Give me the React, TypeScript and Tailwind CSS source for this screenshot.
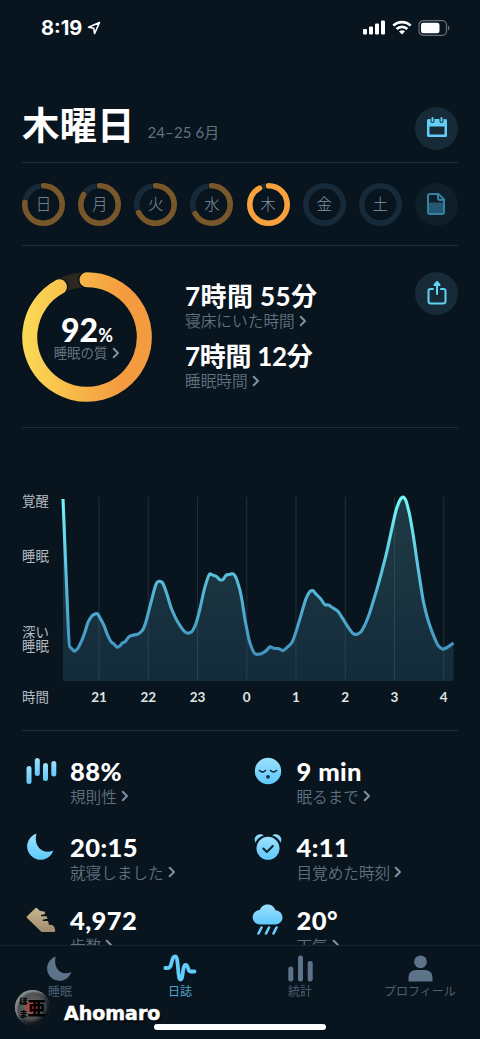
import type { ReactNode } from 'react';
import { clsx } from 'clsx';

const days = [
    { label: '日', value: 77 },
    { label: '月', value: 84 },
    { label: '火', value: 68 },
    { label: '水', value: 67 },
    { label: '木', value: 92, active: true },
    { label: '金', value: 0 },
    { label: '土', value: 0 },
];

const hours = ['21', '22', '23', '0', '1', '2', '3', '4'];

// Sleep depth samples, x / y inside the 391x186 plot
const samples: [number, number][] = [
    [0, 4], [2.5, 65], [6, 151], [8.5, 153.5], [11.5, 156.5], [15, 153.5], [19, 145], [22, 137], [25, 127],
    [29, 120.5], [33, 118.5], [35, 119], [37, 123], [41, 130], [44, 139], [48, 147], [51, 149], [54, 152.5],
    [57, 151], [59, 148], [62, 147], [66, 141.5], [70, 140], [75, 139.5], [80, 135], [83, 127], [87, 111],
    [92, 92], [94, 87], [97, 86], [100, 88], [104, 99], [108, 113], [114, 126], [120, 135], [124, 138.5],
    [129, 137], [133, 129], [137, 114], [141, 95], [145, 82], [147, 78.5], [149, 80], [153, 81], [157, 85],
    [160, 85], [163, 80], [166, 79.5], [170, 78.5], [173, 82], [177, 95], [179, 105], [182, 125], [186, 145],
    [189, 154], [192, 159.5], [198, 159], [203, 156], [207, 151.5], [211, 153.5], [216, 153.5], [220, 156],
    [224, 152.5], [229, 148], [233, 137], [238, 120], [243, 103], [247, 96], [250, 95.5], [253, 99],
    [258, 104], [262, 110.5], [265, 109.5], [270, 113], [275, 116], [280, 124], [285, 132], [290, 139],
    [294, 139.5], [298, 137], [302, 130], [306, 120], [311, 104], [316, 87], [320, 72], [324, 56], [329, 33],
    [333, 15], [337, 4.5], [340, 1.5], [343, 5], [347, 21], [351, 45], [355, 73], [360, 105], [364, 122],
    [369, 137], [375, 151], [380, 154.5], [385, 152], [390.5, 148],
];

const linePath = samples
    .map(([x, y], i) => {
        if (i === 0) return `M${x} ${y}`;
        const next = samples[i + 1];
        if (!next) return `L${x} ${y}`;
        // keep most of each sample's corner so the trace stays slightly rough
        const prev = samples[i - 1];
        const inX = x + (prev[0] - x) * 0.3;
        const inY = y + (prev[1] - y) * 0.3;
        return `L${inX} ${inY}Q${x} ${y} ${x + (next[0] - x) * 0.3} ${y + (next[1] - y) * 0.3}`;
    })
    .join('');

function Ring({ value, active }: { value: number; active?: boolean }) {
    return (
        <svg viewBox="0 0 43 43" className="absolute inset-0 size-full" fill="none" strokeWidth="5.6">
            <circle cx="21.5" cy="21.5" r="18.7" stroke={active ? '#1e2a33' : '#172a3a'} />
            {value > 0 && (
                <>
                    <circle cx="21.5" cy="21.5" r="18.7" pathLength="100" stroke="#08141e" strokeWidth="7" strokeLinecap="round" strokeDasharray={`${value} 100`} transform="rotate(-90 21.5 21.5)" />
                    <circle cx="21.5" cy="21.5" r="18.7" pathLength="100" stroke={active ? '#f9a13c' : '#78572b'} strokeLinecap="round" strokeDasharray={`${value} 100`} transform="rotate(-90 21.5 21.5)" />
                </>
            )}
        </svg>
    );
}

function Chevron({ className = 'ml-1' }: { className?: string }) {
    return (
        <svg viewBox="0 0 8 12" className={clsx('h-3 w-2 shrink-0', className)} fill="none" stroke="#7f91a0" strokeWidth="2" strokeLinecap="round" strokeLinejoin="round">
            <path d="M1.7 1.7 6 6l-4.3 4.3" />
        </svg>
    );
}

function RoundButton({ children, dim }: { children: ReactNode; dim?: boolean }) {
    return (
        <button className={clsx('flex size-[43px] shrink-0 items-center justify-center rounded-full', dim ? 'bg-[#0e1f2a]' : 'bg-[#172a38]')}>
            {children}
        </button>
    );
}

function Metric({ icon, value, label }: { icon: ReactNode; value: string; label: string }) {
    return (
        <div className="flex h-[75px]">
            <div className="flex h-9 w-[47px] shrink-0 items-center pl-[3px]">{icon}</div>
            <div>
                <div className="flex h-9 items-center whitespace-pre font-['Lato','Noto_Sans_CJK_JP',sans-serif] text-[25.5px] leading-9 font-black tracking-[0.4px] text-white">{value}</div>
                <div className="-mt-[4px] flex items-center text-[15.6px] leading-[22px] text-[#5f717e]">
                    {label}
                    <Chevron />
                </div>
            </div>
        </div>
    );
}

function Tab({ icon, label, active }: { icon: ReactNode; label: string; active?: boolean }) {
    return (
        <div className={clsx('flex flex-1 flex-col items-center pt-2', active ? 'text-[#61cdfa]' : 'text-[#5d738a]')}>
            <div className="flex h-7 items-center">{icon}</div>
            <span className={clsx('text-xs leading-[18px]', active ? 'text-[#4da6cc]' : 'text-[#4d6172]')}>{label}</span>
        </div>
    );
}

function StatusBar() {
    return (
        <div className="flex h-[55px] shrink-0 items-center justify-between pr-[30px] pl-[41px] text-white">
            <div className="flex items-center gap-[5px]">
                <span className="font-['Inter',sans-serif] text-[20px] leading-none font-bold">8:19</span>
                <svg viewBox="0 0 14 14" className="size-[14px]" fill="none" stroke="currentColor" strokeWidth="1.6" strokeLinejoin="round">
                    <path d="M12.5 1.5 1.5 6.3l5.2.9.9 5.3z" />
                </svg>
            </div>
            <div className="flex items-center gap-[6px]">
                <svg viewBox="0 0 24 15" className="h-[15px] w-6" fill="currentColor">
                    <rect x="1" y="9" width="4" height="5.5" rx="1.1" />
                    <rect x="7" y="6.5" width="4" height="8" rx="1.1" />
                    <rect x="13" y="3.5" width="4" height="11" rx="1.1" />
                    <rect x="19" y="0.5" width="4" height="14" rx="1.1" />
                </svg>
                <svg viewBox="0 0 20 15" className="h-[15px] w-5" fill="none" stroke="currentColor" strokeWidth="2.6">
                    <path d="M1.3 5.6a12.5 12.5 0 0 1 17.4 0M4.6 9a7.8 7.8 0 0 1 10.8 0" />
                    <path d="m10 14.6-3-3a4.3 4.3 0 0 1 6 0z" fill="currentColor" stroke="none" />
                </svg>
                <svg viewBox="0 0 32 16" className="h-4 w-8">
                    <rect x="1" y="0.7" width="27.5" height="14.6" rx="4.3" fill="none" stroke="#66717a" strokeWidth="1.2" />
                    <rect x="3" y="2.8" width="18.5" height="10.4" rx="2.2" fill="#fff" />
                    <path d="M30 5.7c2 .7 2 3.9 0 4.6z" fill="#66717a" />
                </svg>
            </div>
        </div>
    );
}

function SleepChart() {
    return (
        <section className="mx-[22px] h-[303px] shrink-0 border-b border-[#1c2e3b] pt-[67px]">
            <div className="flex h-[187px]">
                <div className="-mt-[2px] flex w-[41px] shrink-0 flex-col text-[13.4px] leading-[14px] text-[#b5bdc3]">
                    <span>覚醒</span>
                    <span className="mt-[41px]">睡眠</span>
                    <span className="mt-[62px]">深い</span>
                    <span>睡眠</span>
                </div>
                <svg viewBox="0 0 391 186" className="h-[186px] w-[391px] shrink-0 overflow-visible" fill="none">
                    <defs>
                        <linearGradient id="line" x1="0" y1="0" x2="0" y2="160" gradientUnits="userSpaceOnUse">
                            <stop stopColor="#72fafa" />
                            <stop offset="0.5" stopColor="#58bfdb" />
                            <stop offset="1" stopColor="#4193c0" />
                        </linearGradient>
                        <linearGradient id="area" x1="0" y1="0" x2="0" y2="186" gradientUnits="userSpaceOnUse">
                            <stop stopColor="#1f3b45" />
                            <stop offset="1" stopColor="#142b3a" />
                        </linearGradient>
                    </defs>
                    <path d={`${linePath}V186H0Z`} fill="url(#area)" />
                    {hours.map((h, i) => (
                        <path key={h} d={`M${36 + i * 49.25} 2V186`} stroke="#4b7883" strokeOpacity="0.3" />
                    ))}
                    <path d={linePath} stroke="url(#line)" strokeWidth="3.1" strokeLinejoin="round" />
                </svg>
            </div>
            <div className="mt-[6px] flex items-center">
                <span className="-mt-[2px] w-[52.4px] shrink-0 text-[13.4px] leading-[18px] text-[#b5bdc3]">時間</span>
                {hours.map((h) => (
                    <span key={h} className="w-[49.25px] shrink-0 text-center font-['Lato',sans-serif] text-[13.5px] leading-[18px] font-bold text-[#dfe4e7]">{h}</span>
                ))}
            </div>
        </section>
    );
}

export default function App() {
    return (
        <div className="relative flex h-[1039px] w-[480px] flex-col overflow-hidden bg-[#08141e] font-['Noto_Sans_CJK_JP',sans-serif]">
            <svg className="absolute size-0">
                <defs>
                    <linearGradient id="blue" x1="0" y1="0" x2="0" y2="1">
                        <stop stopColor="#9be1fb" />
                        <stop offset="1" stopColor="#5fc8fc" />
                    </linearGradient>
                    <linearGradient id="sand" x1="0" y1="0" x2="0" y2="1">
                        <stop stopColor="#c9b58e" />
                        <stop offset="1" stopColor="#a08d6c" />
                    </linearGradient>
                </defs>
            </svg>

            <StatusBar />

            {/* Header */}
            <header className="mx-[22px] flex h-[108px] shrink-0 items-center border-b border-[#1c2e3b] pt-[39px]">
                <h1 className="-mt-[10px] text-[37.5px] leading-[44px] font-bold text-white">木曜日</h1>
                <span className="mt-[9px] ml-[13px] grow font-['Lato','Noto_Sans_CJK_JP',sans-serif] text-[15px] tracking-[0.1px] text-[#5f7281]">24–25 6月</span>
                <RoundButton>
                    <svg viewBox="0 0 22 22" className="-mt-[2px] size-[22px]">
                        <path fill="#63cef8" fillRule="evenodd" d="M2.5 3h17q1.5 0 1.5 1.5v15q0 1.5-1.5 1.5h-17Q1 21 1 19.5v-15Q1 3 2.5 3ZM3.5 10.5v8h15v-8Z" />
                        <path stroke="#172a38" strokeWidth="4" strokeLinecap="round" d="M6.5 2v3M15.5 2v3" />
                        <path stroke="#63cef8" strokeWidth="2" strokeLinecap="round" d="M6.5 2v3M15.5 2v3" />
                    </svg>
                </RoundButton>
            </header>

            {/* Week */}
            <section className="mx-[22px] flex h-[83px] shrink-0 items-center justify-between border-b border-[#1c2e3b]">
                {days.map((day) => (
                    <div key={day.label} className="relative flex size-[43px] items-center justify-center">
                        <Ring value={day.value} active={day.active} />
                        <span className="text-[15.5px] leading-none font-light text-[#8194a1]">{day.label}</span>
                    </div>
                ))}
                <RoundButton dim>
                    <svg viewBox="0 0 20 24" className="h-6 w-5" fill="none" stroke="#3880a2" strokeWidth="2" strokeLinejoin="round">
                        <path d="M2 10.5h16v11H2z" fill="#245772" stroke="none" />
                        <path d="M4 2h8.5l5.5 5.5V20q0 2-2 2H4q-2 0-2-2V4q0-2 2-2Z" />
                        <path d="M12 2.5V6q0 2 2 2h3.5" />
                    </svg>
                </RoundButton>
            </section>

            {/* Night summary */}
            <section className="mx-[22px] flex h-[182px] shrink-0 items-start border-b border-[#1c2e3b] pt-[26px]">
                <div className="relative flex size-[130px] shrink-0 flex-col items-center pt-[42px]">
                    <svg viewBox="0 0 130 130" className="absolute inset-0 size-full" fill="none" strokeWidth="15">
                        <defs>
                            <linearGradient id="quality" x1="0.1" y1="0" x2="0.9" y2="0.4" gradientTransform="rotate(-25 .5 .5)">
                                <stop stopColor="#fbdc56" />
                                <stop offset="1" stopColor="#f49b3f" />
                            </linearGradient>
                        </defs>
                        <circle cx="65" cy="65" r="57.3" stroke="#2b281f" />
                        <path d="M65 7.7A57.3 57.3 0 1 1 37.4 14.8" stroke="#08141e" strokeWidth="18" strokeLinecap="round" />
                        <path d="M65 7.7A57.3 57.3 0 1 1 37.4 14.8" stroke="url(#quality)" strokeLinecap="round" />
                    </svg>
                    <div className="relative flex items-baseline font-['Lato',sans-serif] leading-8 text-white">
                        <span className="text-[32px] font-black">92</span>
                        <span className="text-[18px] font-bold">%</span>
                    </div>
                    <div className="relative -mt-[6px] flex items-center text-[13.4px] leading-[15px] font-[350] text-[#6b7c88]">
                        睡眠の質
                        <Chevron className="ml-[5px]" />
                    </div>
                </div>
                <div className="ml-[33px] grow pt-[10px]">
                    <div className="font-['Lato','Noto_Sans_CJK_JP',sans-serif] text-[26px] leading-7 font-bold tracking-[0.4px] text-white">7時間 55分</div>
                    <div className="flex h-[22px] items-center text-[15.7px] leading-[22px] font-[350] text-[#5f717e]">寝床にいた時間<Chevron /></div>
                    <div className="mt-[10px] font-['Lato','Noto_Sans_CJK_JP',sans-serif] text-[26px] leading-7 font-bold tracking-[-0.3px] text-white">7時間 12分</div>
                    <div className="flex h-[22px] items-center text-[15.7px] leading-[22px] font-[350] text-[#5f717e]">睡眠時間<Chevron /></div>
                </div>
                <RoundButton>
                    <svg viewBox="0 0 20 24" className="-mt-[2px] h-6 w-5" fill="none" stroke="#63d3f4" strokeWidth="2" strokeLinecap="round" strokeLinejoin="round">
                        <path d="M6 8H3.5Q1.5 8 1.5 10v10q0 2.5 2.5 2.5h12q2.5 0 2.5-2.5V10q0-2-2-2H14" />
                        <path d="M10 13V2.5" />
                        <path d="M7.5 4 10 1l2.5 3z" fill="#63d3f4" />
                    </svg>
                </RoundButton>
            </section>

            <SleepChart />

            <section className="mx-[23px] grid min-h-0 grow grid-cols-[226.5px_1fr] grid-rows-[75.5px_73px_75px] overflow-hidden pt-[22px] font-[350]">
                <Metric
                    value="88%"
                    label="規則性"
                    icon={
                        <svg viewBox="0 0 31 28" className="h-7 w-[31px]" fill="url(#blue)">
                            <rect x="0.5" y="9" width="5" height="18" rx="2.5" />
                            <rect x="8.8" y="1" width="5" height="18" rx="2.5" />
                            <rect x="17" y="6" width="5" height="18" rx="2.5" />
                            <rect x="25.3" y="4" width="5" height="15.5" rx="2.5" />
                        </svg>
                    }
                />
                <Metric
                    value="9 min"
                    label="眠るまで"
                    icon={
                        <svg viewBox="0 0 28 28" className="ml-[1px] size-7" fill="none">
                            <circle cx="14" cy="14" r="13.2" fill="url(#blue)" />
                            <path d="M5.5 13.5q3 3 6 0M16.5 13.5q3 3 6 0" stroke="#17303f" strokeWidth="1.7" strokeLinecap="round" />
                            <circle cx="14" cy="19.8" r="1.9" fill="#17303f" />
                        </svg>
                    }
                />
                <Metric
                    value="20:15"
                    label="就寝しました"
                    icon={
                        <svg viewBox="0 0 27 27" className="ml-[1px] size-[27px]" fill="url(#blue)">
                            <path d="M9.5.6A13.4 13.4 0 1 0 26.3 17.4C15.5 22.5 6 12.5 9.5.6Z" />
                        </svg>
                    }
                />
                <Metric
                    value="4:11"
                    label="目覚めた時刻"
                    icon={
                        <svg viewBox="0 0 28 28" className="ml-[1px] size-7" fill="url(#blue)">
                            <path d="M1.5 9.8C-1.5 4.5 4-.8 10 2.2 5.5 3.8 3 6 1.5 9.8ZM26.5 9.8C29.5 4.5 24-.8 18 2.2 22.5 3.8 25 6 26.5 9.8Z" />
                            <circle cx="14" cy="15.3" r="11.5" />
                            <path d="m9.3 15.5 3.5 3.5 6-6" fill="none" stroke="#0b2431" strokeWidth="2" strokeLinecap="round" strokeLinejoin="round" />
                        </svg>
                    }
                />
                <Metric
                    value="4,972"
                    label="歩数"
                    icon={
                        <svg viewBox="0 0 30 26" className="h-[26px] w-[30px]">
                            <path fill="url(#sand)" d="M9.3 1.2q.8-.8 1.6-.1L13.800 3.8 18.800 4.700 19.200 7 15 8v1.200h5.500l1.200 2.400-5 1.200v1.300h5.300l1 3.700 3.500.2q2.800 2 2.800 5.500 0 1.600-1.500 1.600H16.500q-.8 0-1.500-.7L1 11q-.8-.9 0-1.700Z" />
                        </svg>
                    }
                />
                <Metric
                    value="20°"
                    label="天気"
                    icon={
                        <svg viewBox="0 0 32 31" className="-ml-[1px] h-[31px] w-8">
                            <path fill="url(#blue)" d="M8 20.5A7.2 7.2 0 0 1 7.8 6C10-.8 20.5-1.8 23.5 6.2A7.2 7.2 0 0 1 24.5 20.5Z" />
                            <path d="m9.500 23.500-3 6M17 23.500l-3 6M24.500 23.500l-3 6" stroke="#6acdfb" strokeWidth="2.600" strokeLinecap="round" />
                        </svg>
                    }
                />
            </section>

            {/* Tab bar */}
            <nav className="flex h-[94px] shrink-0 border-t border-[#162733] bg-[#08141e]">
                <Tab
                    label="睡眠"
                    icon={
                        <svg viewBox="0 0 27 27" className="mr-[2px] size-[25px]" fill="currentColor">
                            <path d="M9.5.6A13.4 13.4 0 1 0 26.3 17.4C15.5 22.5 6 12.5 9.5.6Z" />
                        </svg>
                    }
                />
                <Tab
                    active
                    label="日誌"
                    icon={
                        <svg viewBox="0 0 34 28" className="h-7 w-[34px]" fill="none" stroke="currentColor" strokeWidth="3.8" strokeLinecap="round" strokeLinejoin="round">
                            <path d="M2.3 14H5Q7.2 14 8.2 10C9.5 5 10 2.5 12 2.5S14.3 6 15 14s1 11.500 2.700 11.500S19.500 20 20.300 15.500s3-7 4.700-1.500Q25.900 17.500 27.500 17.500H31.500" />
                        </svg>
                    }
                />
                <Tab
                    label="統計"
                    icon={
                        <svg viewBox="0 0 25 27" className="h-[27px] w-[25px]" fill="currentColor">
                            <rect x="0.3" y="11.5" width="5" height="15" rx="2.3" />
                            <rect x="10" y="0.5" width="5" height="26" rx="2.3" />
                            <rect x="19.7" y="6" width="5" height="20.5" rx="2.3" />
                        </svg>
                    }
                />
                <Tab
                    label="プロフィール"
                    icon={
                        <svg viewBox="0 0 25 27" className="h-[27px] w-[25px]" fill="currentColor">
                            <circle cx="12.5" cy="6.8" r="6.4" />
                            <path d="M.5 26.5v-4q0-7.5 8-7.5h8q8 0 8 7.5v4Z" />
                        </svg>
                    }
                />
            </nav>

            {/* Home indicator */}
            <div className="absolute bottom-[9px] left-[154px] h-[6px] w-[172px] rounded-full bg-white" />

            {/* Author badge */}
            <div className="absolute top-[989px] left-[15px] flex items-center gap-[14px]">
                <div className="flex size-[35px] items-center justify-center overflow-hidden rounded-full bg-radial from-[#d8262b] from-10% via-[#565a5c] via-35% to-[#3a3f42] font-black text-black shadow-[inset_2px_2px_2px_#8b9093,inset_-3px_-3px_4px_#0a0d10]">
                    <span className="flex flex-col text-[8.5px] leading-[13px]"><span>ほ</span><span>ま</span></span>
                    <span className="text-[18px] leading-none">亜</span>
                </div>
                <span className="mt-[12px] font-['DejaVu_Sans',sans-serif] text-[19px] leading-6 font-bold text-white [-webkit-text-stroke:0.5px_white] [text-shadow:1px_2px_2px_#000]">Ahomaro</span>
            </div>
        </div>
    );
}
